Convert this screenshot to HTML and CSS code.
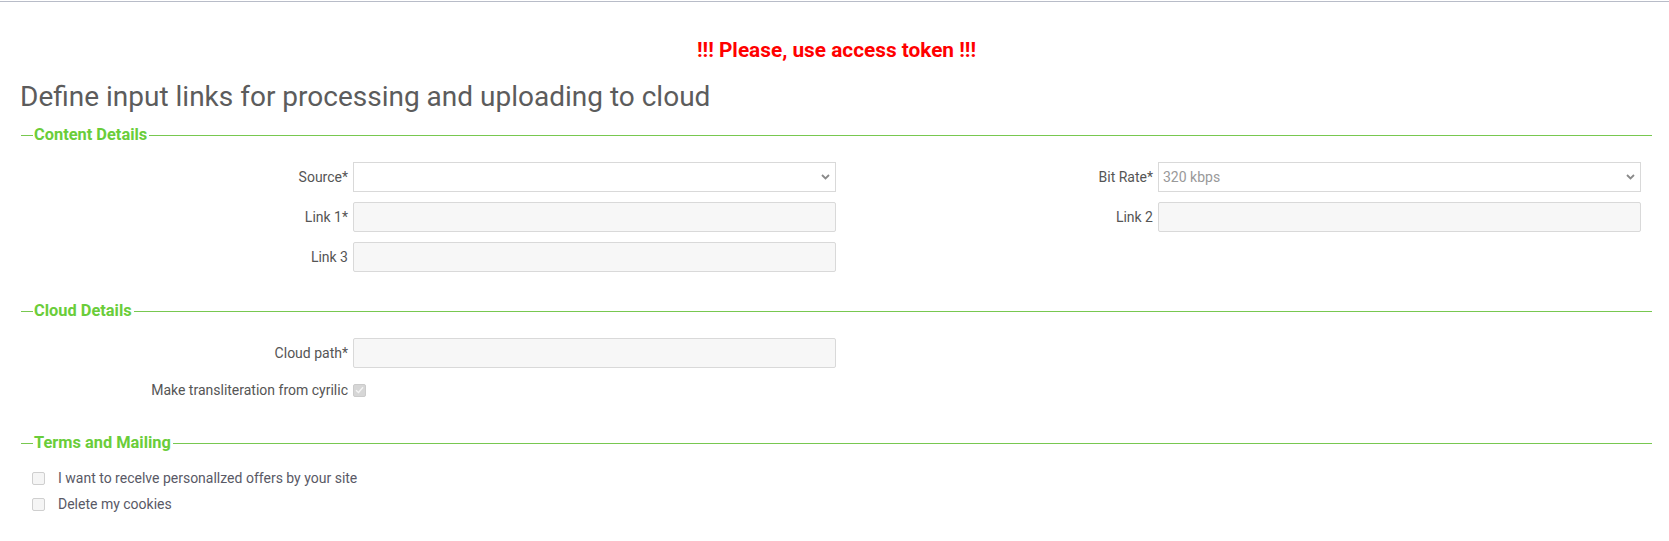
FILE: index.html
```html
<!DOCTYPE html>
<html lang="en">
<head>
<meta charset="utf-8">
<title>Define input links</title>
<link rel="stylesheet" href="styles.css">
</head>
<body>
<div class="topbar"></div>
<main class="page">
  <p class="warning">!!! Please, use access token !!!</p>
  <h1 class="title">Define input links for processing and uploading to cloud</h1>

  <div class="legend legend-first"><span class="dash"></span><span class="legend-text">Content Details</span><span class="rule"></span></div>
  <div class="form-grid">
    <div class="field">
      <label class="label">Source*</label>
      <div class="select-wrap">
        <select class="select"><option></option></select>
        <svg class="chev" width="9" height="6" viewBox="0 0 9 6"><path d="M1 1 L4.5 4.5 L8 1" fill="none" stroke="#8a8a8a" stroke-width="1.8"/></svg>
      </div>
    </div>
    <div class="field">
      <label class="label">Bit Rate*</label>
      <div class="select-wrap">
        <select class="select muted"><option>320 kbps</option></select>
        <svg class="chev" width="9" height="6" viewBox="0 0 9 6"><path d="M1 1 L4.5 4.5 L8 1" fill="none" stroke="#8a8a8a" stroke-width="1.8"/></svg>
      </div>
    </div>
    <div class="field">
      <label class="label">Link 1*</label>
      <input class="input" type="text">
    </div>
    <div class="field">
      <label class="label">Link 2</label>
      <input class="input" type="text">
    </div>
    <div class="field">
      <label class="label">Link 3</label>
      <input class="input" type="text">
    </div>
  </div>

  <div class="legend legend-mid"><span class="dash"></span><span class="legend-text">Cloud Details</span><span class="rule"></span></div>
  <div class="form-single">
    <div class="field">
      <label class="label">Cloud path*</label>
      <input class="input" type="text">
    </div>
    <div class="field field-check">
      <label class="label">Make transliteration from cyrilic</label>
      <span class="check check-on"><svg width="9" height="8" viewBox="0 0 9 8"><path d="M1 4.2 L3.5 6.5 L8 1.2" fill="none" stroke="#f4f4f4" stroke-width="1.4"/></svg></span>
    </div>
  </div>

  <div class="legend legend-terms"><span class="dash"></span><span class="legend-text">Terms and Mailing</span><span class="rule"></span></div>
  <div class="terms">
    <div class="term-row"><span class="check"></span><span class="term-text">I want to recelve personallzed offers by your site</span></div>
    <div class="term-row"><span class="check"></span><span class="term-text">Delete my cookies</span></div>
  </div>
</main>
</body>
</html>
```

FILE: styles.css
```css
html, body {
  margin: 0;
  padding: 0;
  background: #fff;
}
body {
  font-family: Roboto, "Noto Sans", "Liberation Sans", sans-serif;
  color: #555;
  width: 1669px;
  height: 541px;
  overflow: hidden;
}
.topbar {
  height: 1px;
  border-bottom: 1px solid #b8bcc8;
}
.page {
  padding: 0 17px 0 21px;
}
.warning {
  margin: 36px 0 0 0;
  text-align: center;
  color: #ff0000;
  font-weight: 700;
  font-size: 20.8px;
  line-height: 24px;
}
.title {
  margin: 18px 0 0 -1px;
  font-weight: 400;
  font-size: 28px;
  line-height: 34px;
  color: #5c5c5c;
}
.legend {
  display: flex;
  align-items: center;
  height: 20px;
}
.legend-first { margin-top: 11px; }
.legend-mid { margin-top: 29px; }
.legend-terms { margin-top: 31px; }
.dash {
  width: 12px;
  height: 1px;
  background: #78c850;
  margin-right: 1px;
}
.rule {
  flex: 1;
  height: 1px;
  background: #78c850;
  margin-left: 2px;
}
.legend-text {
  color: #6acd3a;
  font-weight: 700;
  font-size: 16.4px;
  line-height: 20px;
}
.form-grid {
  margin: 17px 0 0 20px;
  display: grid;
  grid-template-columns: 805px 805px;
  row-gap: 10px;
}
.form-single {
  margin: 17px 0 0 20px;
  display: grid;
  grid-template-columns: 805px;
  row-gap: 10px;
}
.field {
  display: grid;
  grid-template-columns: 307px 483px;
  column-gap: 5px;
  align-items: center;
}
.label {
  text-align: right;
  font-size: 14px;
  color: #555;
}
.input, .select {
  box-sizing: border-box;
  width: 483px;
  height: 30px;
  margin: 0;
  border: 1px solid #d9d9d9;
  border-radius: 2px;
  background: #f7f7f7;
  font-family: inherit;
  font-size: 14px;
  outline: none;
}
.select-wrap {
  position: relative;
  width: 483px;
  height: 30px;
}
.select {
  -webkit-appearance: none;
  appearance: none;
  background: #fff;
  padding: 0 20px 0 4px;
  color: #555;
  border-radius: 0;
}
.select.muted {
  color: #999;
}
.chev {
  position: absolute;
  right: 6px;
  top: 12px;
}
.field-check {
  height: 24px;
}
.check {
  box-sizing: border-box;
  display: inline-flex;
  align-items: center;
  justify-content: center;
  width: 13px;
  height: 13px;
  border: 1px solid #cfcfcf;
  border-radius: 2px;
  background: #f5f5f5;
}
.check-on {
  background: #d6d6d6;
  border-color: #cbcbcb;
  justify-self: start;
}
.terms {
  margin-top: 12px;
}
.term-row {
  display: flex;
  align-items: center;
  height: 26px;
  padding-left: 11px;
}
.term-text {
  margin-left: 13px;
  font-size: 14px;
  color: #595966;
}
```
